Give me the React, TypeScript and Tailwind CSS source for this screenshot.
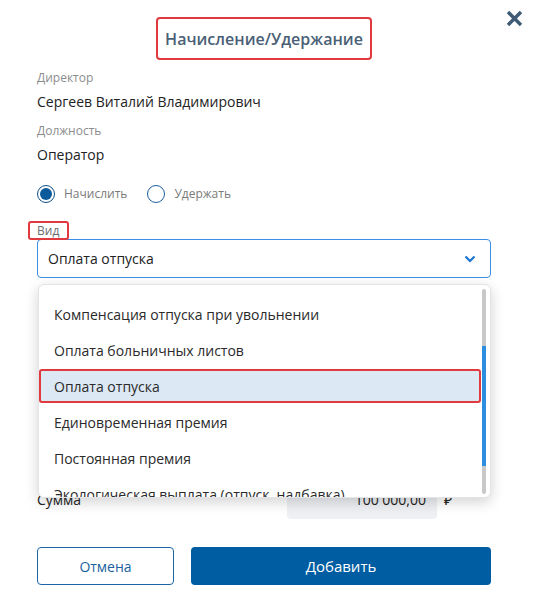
import React from "react";

const options = [
  "Компенсация отпуска при увольнении",
  "Оплата больничных листов",
  "Оплата отпуска",
  "Единовременная премия",
  "Постоянная премия",
  "Экологическая выплата (отпуск, надбавка)",
];

const selected = "Оплата отпуска";

const Field = ({ label, value }: { label: string; value: string }) => (
  <div className="flex flex-col">
    <span className="text-[12px] leading-4 text-[#8c8c8c]">{label}</span>
    <span className="mt-[6px] text-[14px] leading-5 text-[#222]">{value}</span>
  </div>
);

const Radio = ({ checked, label }: { checked?: boolean; label: string }) => (
  <label className="flex items-center gap-[9px]">
    <span
      className={`flex h-[18px] w-[18px] items-center justify-center rounded-full border-[1.5px] ${
        checked ? "border-[#0b4f8c]" : "border-[#1a5fa0]"
      }`}
    >
      {checked && <span className="h-[12px] w-[12px] rounded-full bg-[#0b5a9c]" />}
    </span>
    <span className="text-[12px] text-[#7a7a7a]">{label}</span>
  </label>
);

export default function App() {
  return (
    <div
      className="relative min-h-[615px] w-full bg-white pl-[37px] pr-[43px] pt-[17px]"
      style={{ fontFamily: '"Open Sans", "Noto Sans", sans-serif' }}
    >
      <button className="absolute right-[11px] top-[10px] text-[#3f5b75]">
        <svg width="17" height="17" viewBox="0 0 17 17">
          <path d="M2 2L15 15M15 2L2 15" stroke="currentColor" strokeWidth="3.4" strokeLinecap="butt" />
        </svg>
      </button>

      <div className="flex justify-center">
        <h2 className="flex h-[43px] items-center rounded-[4px] border-[2.5px] border-[#e0393e] px-[7px] text-[16px] font-semibold text-[#4a6076]">
          Начисление/Удержание
        </h2>
      </div>

      <div className="mt-[10px] flex flex-col gap-[11px]">
        <Field label="Директор" value="Сергеев Виталий Владимирович" />
        <Field label="Должность" value="Оператор" />
      </div>

      <div className="mt-[19px] flex h-5 items-center gap-[20px]">
        <Radio checked label="Начислить" />
        <Radio label="Удержать" />
      </div>

      <div className="relative mt-[19px]">
        <div className="relative w-fit">
          <span className="block text-[12px] leading-4 text-[#6d6d6d]">Вид</span>
          <span className="absolute -left-[9px] -right-[10px] -top-[2px] -bottom-[1px] rounded-[3px] border-2 border-[#e0393e]" />
        </div>
        <div className="flex h-[39px] items-center justify-between rounded-[4px] border border-[#3a8ee6] pl-[10px] pr-[14px]">
          <span className="text-[14px] text-[#222]">Оплата отпуска</span>
          <svg width="12" height="8" viewBox="0 0 12 8">
            <path d="M1.5 1.5L6 6L10.5 1.5" fill="none" stroke="#1a73d0" strokeWidth="2.2" />
          </svg>
        </div>

        <div className="absolute left-[1px] right-0 top-[61px] z-10 h-[214px] overflow-hidden rounded-[6px] border border-[#e2e4e8] bg-white shadow-[0_4px_14px_rgba(0,0,0,0.18)]">
          <div className="flex flex-col gap-[2px] pr-[9px] pt-[12px]">
            {options.map((o) => (
              <div
                key={o}
                className={`flex h-[34px] shrink-0 items-center rounded-[3px] border-2 pl-[13px] text-[14px] text-[#2a2a2a] ${
                  o === selected ? "border-[#e0393e] bg-[#dce8f3]" : "border-transparent"
                }`}
              >
                {o}
              </div>
            ))}
          </div>
          <div className="absolute right-[4px] top-[4px] bottom-[3px] w-[4px] rounded-full bg-[#c8c8c8]">
            <div className="absolute left-0 right-0 top-[57px] h-[120px] bg-[#2d8ee0]" />
          </div>
        </div>
      </div>

      <div className="mt-[202px] flex h-[39px] items-center">
        <span className="flex-1 text-[14px] text-[#222]">Сумма</span>
        <div className="flex h-[39px] w-[150px] items-center justify-end rounded-[4px] bg-[#eef0f3] pr-[11px] text-[14px] text-[#222]">
          100 000,00
        </div>
        <span className="ml-[7px] w-[47px] text-[14px] text-[#222]">₽</span>
      </div>

      <div className="mt-[28px] flex gap-[17px]">
        <button className="h-[38px] w-[137px] rounded-[4px] border border-[#1c64a6] text-[14px] text-[#1a5f9e]">
          Отмена
        </button>
        <button className="h-[38px] flex-1 rounded-[4px] bg-[#005da1] text-[15px] font-medium text-white">
          Добавить
        </button>
      </div>
    </div>
  );
}
